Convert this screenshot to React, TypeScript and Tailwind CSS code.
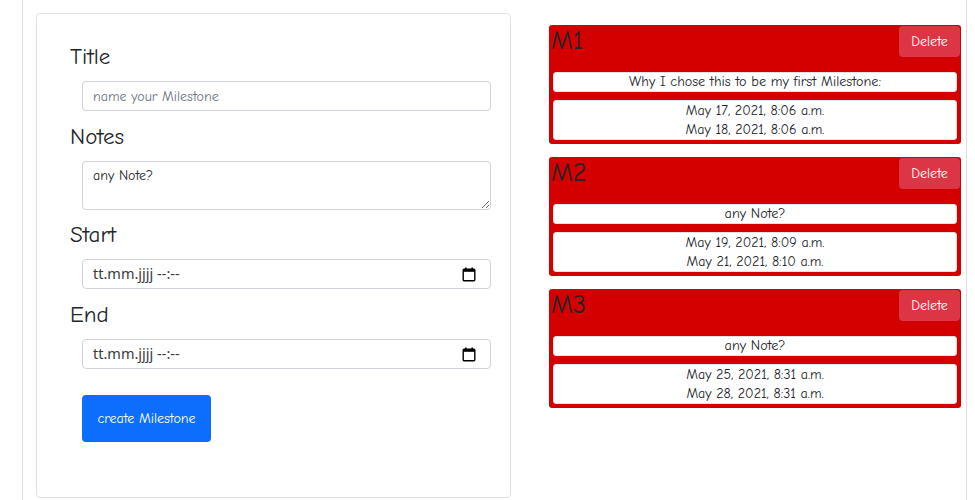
import React from "react";

const milestones = [
  {
    title: "M1",
    note: "Why I chose this to be my first Milestone:",
    start: "May 17, 2021, 8:06 a.m.",
    end: "May 18, 2021, 8:06 a.m.",
  },
  {
    title: "M2",
    note: "any Note?",
    start: "May 19, 2021, 8:09 a.m.",
    end: "May 21, 2021, 8:10 a.m.",
  },
  {
    title: "M3",
    note: "any Note?",
    start: "May 25, 2021, 8:31 a.m.",
    end: "May 28, 2021, 8:31 a.m.",
  },
];

function CalendarIcon() {
  return (
    <svg width="14" height="15" viewBox="0 0 14 15" className="shrink-0">
      <rect x="3" y="0.5" width="1.6" height="3" fill="#000" />
      <rect x="9.4" y="0.5" width="1.6" height="3" fill="#000" />
      <rect x="1.2" y="2.2" width="11.6" height="11.6" rx="1" fill="none" stroke="#000" strokeWidth="1.4" />
      <rect x="1.2" y="2.2" width="11.6" height="2.6" fill="#000" />
    </svg>
  );
}

function DateField() {
  return (
    <div className="ml-[12px] flex h-[30px] w-[409px] items-center justify-between rounded-[4px] border border-[#ced4da] bg-white pl-[10px] pr-[14px]">
      <span className="font-['Segoe_UI','Noto_Sans',sans-serif] text-[14.5px] font-normal text-[#3a3a3a]">tt.mm.jjjj --:--</span>
      <CalendarIcon />
    </div>
  );
}

function Label({ children }: { children: React.ReactNode }) {
  return <div className="h-[24px] text-[23px] leading-[24px] text-[#212529]">{children}</div>;
}

export default function App() {
  return (
    <div className="h-[500px] w-[975px] overflow-hidden bg-white pl-[22px] font-['Comic_Sans_MS','Comic_Neue','Open_Sans',sans-serif] text-[#212529]">
      <div className="flex h-[500px] w-[945px] items-start border-x border-[#dedede] pl-[13px]">
        {/* form card */}
        <div className="mt-[13px] h-[485px] w-[475px] rounded-[4px] border border-[#dee2e6] pl-[33px] pt-[31px]">
          <Label>Title</Label>
          <input
            placeholder="name your Milestone"
            className="ml-[12px] mt-[12px] block h-[30px] w-[409px] rounded-[4px] border border-[#ced4da] bg-white px-[10px] text-[14px] text-[#212529] outline-none placeholder:text-[#6c757d]"
          />
          <div className="mt-[14px]">
            <Label>Notes</Label>
          </div>
          <textarea
            readOnly
            defaultValue="any Note?"
            className="ml-[12px] mt-[12px] block h-[49px] w-[409px] rounded-[4px] border border-[#ced4da] bg-white px-[10px] pt-[4px] text-[14px] leading-[19px] text-[#212529] outline-none"
          />
          <div className="mt-[13px]">
            <Label>Start</Label>
          </div>
          <div className="mt-[12px]">
            <DateField />
          </div>
          <div className="mt-[14px]">
            <Label>End</Label>
          </div>
          <div className="mt-[12px]">
            <DateField />
          </div>
          <button className="ml-[12px] mt-[26px] flex h-[47px] w-[129px] items-center justify-center rounded-[4px] bg-[#0d6efd] text-[14px] text-white">
            create Milestone
          </button>
        </div>

        {/* milestone list */}
        <div className="ml-[38px] mt-[25px] flex w-[412px] flex-col gap-[13px]">
          {milestones.map((m) => (
            <div key={m.title} className="h-[119px] rounded-[3px] bg-[#d40000] pb-[4px] pt-[1px]">
              <div className="flex h-[46px] items-start justify-between pl-[2px] pr-[1px]">
                <h2 className="text-[26px] leading-[31px] text-[#212529]">{m.title}</h2>
                <button className="h-[31px] w-[61px] rounded-[4px] bg-[#dc3545] text-[14px] text-white">Delete</button>
              </div>
              <div className="mx-[4px] h-[20px] rounded-[3px] border border-[#e2e2e2] bg-white text-center text-[14.2px] leading-[18px]">
                {m.note}
              </div>
              <div className="mx-[4px] mt-[8px] h-[40px] rounded-[3px] border border-[#e2e2e2] bg-white text-center text-[14px] leading-[19px]">
                <div>{m.start}</div>
                <div>{m.end}</div>
              </div>
            </div>
          ))}
        </div>
      </div>
    </div>
  );
}
